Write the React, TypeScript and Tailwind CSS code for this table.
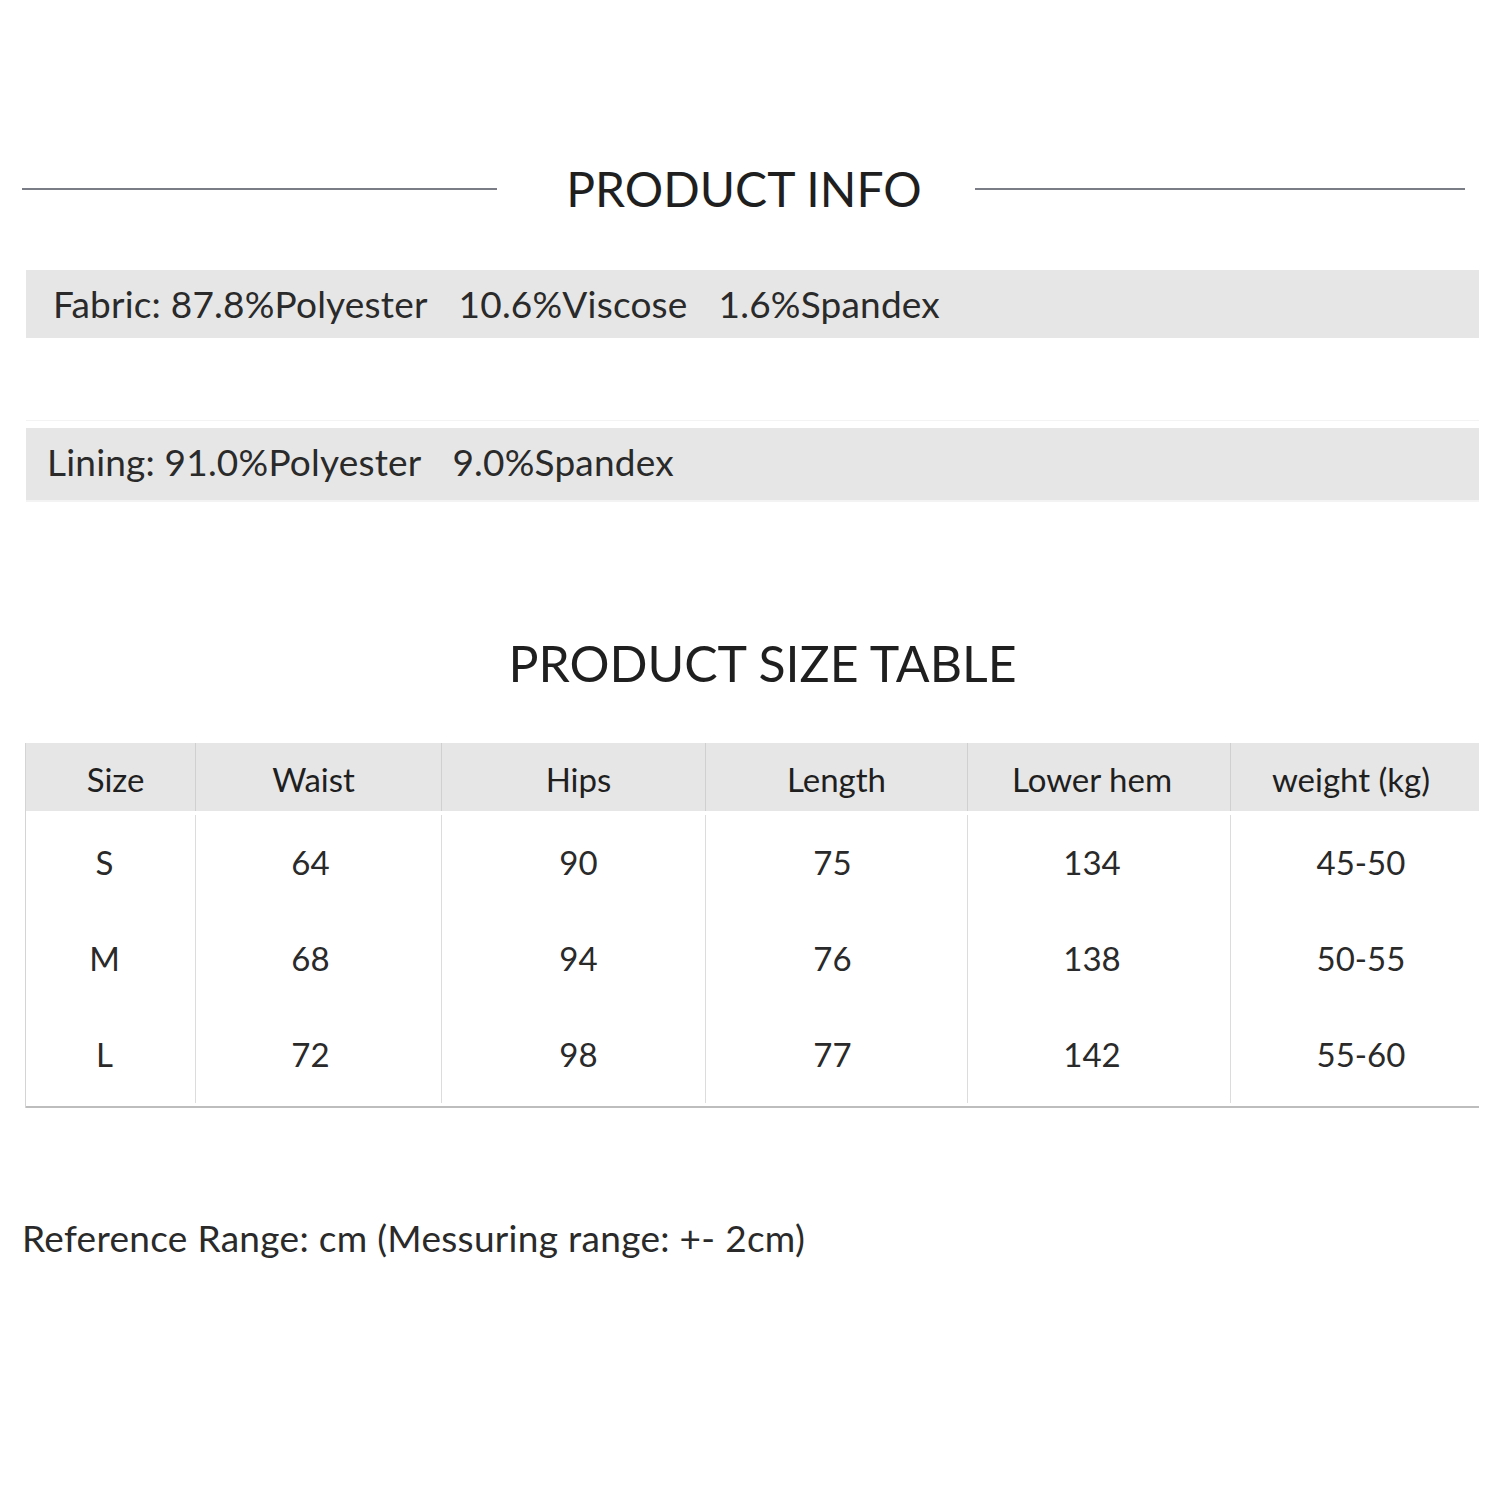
import * as React from 'react'

const font = { fontFamily: 'Lato, "Open Sans", sans-serif' }

const headers = ['Size', 'Waist', 'Hips', 'Length', 'Lower hem', 'weight (kg)']
const rows = [
    ['S', '64', '90', '75', '134', '45-50'],
    ['M', '68', '94', '76', '138', '50-55'],
    ['L', '72', '98', '77', '142', '55-60'],
]
const cols = 'grid grid-cols-[169px_246px_264px_262px_263px_249px]'
// small nudges so the text sits where the picture has it
const headPad = ['pl-[10px]', 'pr-[10px]', 'pl-[10px]', 'pr-[0px]', 'pr-[14px]', 'pr-[8px]']
const bodyPad = ['pr-[12px]', 'pr-[16px]', 'pl-[10px]', 'pr-[8px]', 'pr-[14px]', 'pl-[12px]']

export default function App() {
    return (
        <div className="w-[1500px] h-[1500px] bg-white text-[#1f1f1f]" style={font}>
            {/* product info heading */}
            <div className="pt-[161px] flex items-center">
                <div className="ml-[22px] w-[475px] h-[2px] bg-[#7a7c86]" />
                <h1 className="w-[478px] pl-[16px] text-center text-[48px] leading-[56px] font-normal">
                    PRODUCT INFO
                </h1>
                <div className="w-[490px] h-[2px] bg-[#7a7c86]" />
            </div>

            <div className="mt-[53px] mx-[26px] w-[1453px] h-[68px] bg-[#e6e6e6] flex items-center pl-[27px] gap-[31px] text-[37px] tracking-[0.2px] text-[#2a2a2a]">
                <span>Fabric: 87.8%Polyester</span>
                <span>10.6%Viscose</span>
                <span>1.6%Spandex</span>
            </div>

            <div className="mt-[82px] mx-[26px] w-[1453px] border-t border-b-2 border-[#f3f3f3]">
                <div className="mt-[7px] h-[72px] bg-[#e6e6e6] flex items-center pl-[21px] pb-[5px] gap-[31px] text-[37px] tracking-[0.2px] text-[#2a2a2a]">
                    <span>Lining: 91.0%Polyester</span>
                    <span>9.0%Spandex</span>
                </div>
            </div>

            {/* size table */}
            <h2 className="mt-[131px] text-center text-[50px] leading-[60px] font-normal pl-[25px]">
                PRODUCT SIZE TABLE
            </h2>

            <div className="mt-[50px] ml-[25px] w-[1454px] border-l border-[#d4d4d4]">
                <div className={`${cols} h-[68px] bg-[#e6e6e6] text-[33px]`}>
                    {headers.map((h, i) => (
                        <div
                            key={h}
                            className={`flex items-center justify-center pt-[6px] ${headPad[i]} ${i > 0 ? 'border-l border-[#d0d0d0]' : ''} ${i === 1 ? 'border-[#8a8a8a]' : ''}`}
                        >
                            {h}
                        </div>
                    ))}
                </div>
                <div className="pt-1 pb-[3px] border-b-2 border-[#bdbdbd]">
                    {rows.map((r) => (
                        <div key={r[0]} className={`${cols} h-[96px] text-[33px] text-[#2a2a2a]`}>
                            {r.map((c, i) => (
                                <div
                                    key={i}
                                    className={`flex items-center justify-center ${bodyPad[i]} ${i > 0 ? 'border-l border-[#dcdcdc]' : ''} ${i === 1 ? 'border-[#8a8a8a]' : ''}`}
                                >
                                    {c}
                                </div>
                            ))}
                        </div>
                    ))}
                </div>
            </div>

            <p className="mt-[102px] ml-[22px] text-[37px] tracking-[0.3px] text-[#2a2a2a]">
                Reference Range: cm (Messuring range: +- 2cm)
            </p>
        </div>
    )
}
